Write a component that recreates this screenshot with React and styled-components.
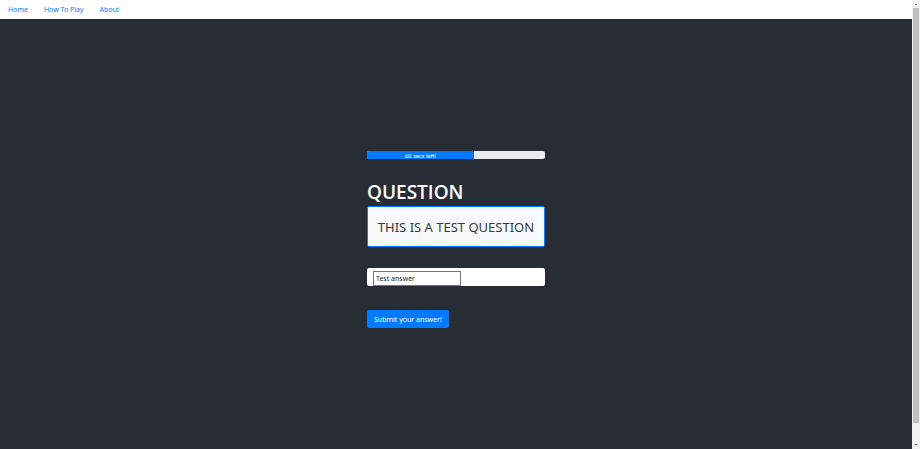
import React, { useState } from "react";
import styled, { createGlobalStyle } from "styled-components";

const GlobalStyle = createGlobalStyle`
  * { box-sizing: border-box; }
  body {
    margin: 0;
    overflow: hidden;
    background: #282c34;
    font-family: "Noto Sans", "Open Sans", sans-serif;
  }
`;

const Window = styled.div`
  display: flex;
  height: 100vh;
`;

const Page = styled.div`
  display: flex;
  flex: 1;
  flex-direction: column;
  min-width: 0;
`;

const Nav = styled.nav`
  display: flex;
  height: 19px;
  background: #fff;
`;

const NavLink = styled.a`
  padding: 0 8px;
  color: #007bff;
  font-size: 7px;
  line-height: 20px;
  text-decoration: none;
`;

const Main = styled.main`
  display: flex;
  flex: 1;
  align-items: center;
  justify-content: center;
  padding-top: 10px;
  background: #282c34;
`;

const Quiz = styled.form`
  display: flex;
  flex-direction: column;
  align-items: flex-start;
  width: 178px;
`;

const Progress = styled.div`
  width: 100%;
  height: 8px;
  overflow: hidden;
  border-radius: 2px;
  background: #e9ecef;
`;

const ProgressBar = styled.div`
  height: 100%;
  background: #007bff;
  color: #fff;
  font-family: "Lato", sans-serif;
  font-size: 6px;
  line-height: 9px;
  text-align: center;
`;

const Heading = styled.h1`
  margin: 21px 0 2px;
  color: #fff;
  font-family: "Open Sans", "Noto Sans", sans-serif;
  font-size: 19px;
  font-weight: 600;
  line-height: 24px;
`;

const QuestionCard = styled.div`
  width: 100%;
  padding: 9px 0 7px;
  border: 1px solid #007bff;
  border-radius: 2px;
  background: #f8f9fa;
  color: #343a40;
  font-size: 13px;
  line-height: 23px;
  text-align: center;
  white-space: nowrap;
`;

const AnswerCard = styled.div`
  display: flex;
  width: 100%;
  height: 18px;
  margin: 21px 0 24px;
  padding: 3px 6px 0;
  border-radius: 2px;
  background: #fff;
`;

const AnswerInput = styled.input`
  width: 88px;
  height: 15px;
  padding: 0 2px;
  border: 1px solid #767676;
  background: #fff;
  color: #212529;
  font: 7px/13px "Noto Sans", "Open Sans", sans-serif;
`;

const SubmitButton = styled.button`
  height: 18px;
  padding: 1px 7px 0;
  border: 0;
  border-radius: 2px;
  background: #007bff;
  color: #fff;
  font: 7px/17px "Noto Sans", "Open Sans", sans-serif;
  white-space: nowrap;
`;

const ScrollTrack = styled.div`
  display: flex;
  flex-direction: column;
  align-items: center;
  width: 8px;
  background: #f1f1f1;
`;

const ScrollThumb = styled.div`
  flex: 1;
  width: 6px;
  background: #c1c1c1;
`;

const ArrowBox = styled.svg`
  width: 8px;
  height: ${({ $height }) => $height}px;
`;

const links = ["Home", "How To Play", "About"];

export default function App() {
  const [answer, setAnswer] = useState("Test answer");
  const secondsLeft = 60;

  return (
    <>
      <GlobalStyle />
      <Window>
        <Page>
          <Nav>
            {links.map((label) => (
              <NavLink href="#" key={label}>{label}</NavLink>
            ))}
          </Nav>
          <Main>
            <Quiz onSubmit={(event) => event.preventDefault()}>
              <Progress
                role="progressbar"
                aria-label="Time left"
                aria-valuenow={secondsLeft}
                aria-valuemin={0}
                aria-valuemax={100}
              >
                <ProgressBar style={{ width: `${secondsLeft}%` }}>
                  {secondsLeft} secs left!
                </ProgressBar>
              </Progress>
              <Heading>QUESTION</Heading>
              <QuestionCard>THIS IS A TEST QUESTION</QuestionCard>
              <AnswerCard>
                <AnswerInput
                  type="text"
                  aria-label="Your answer"
                  value={answer}
                  onChange={(event) => setAnswer(event.target.value)}
                />
              </AnswerCard>
              <SubmitButton type="submit">Submit your answer!</SubmitButton>
            </Quiz>
          </Main>
        </Page>
        <ScrollTrack aria-hidden="true">
          <ArrowBox $height={8} viewBox="0 0 8 8">
            <path d="M3 4H5V5H3Z" fill="#a3a3a3" />
          </ArrowBox>
          <ScrollThumb />
          <ArrowBox $height={26} viewBox="0 0 8 26">
            <path d="M3 21H5V22H3Z" fill="#505050" />
          </ArrowBox>
        </ScrollTrack>
      </Window>
    </>
  );
}
